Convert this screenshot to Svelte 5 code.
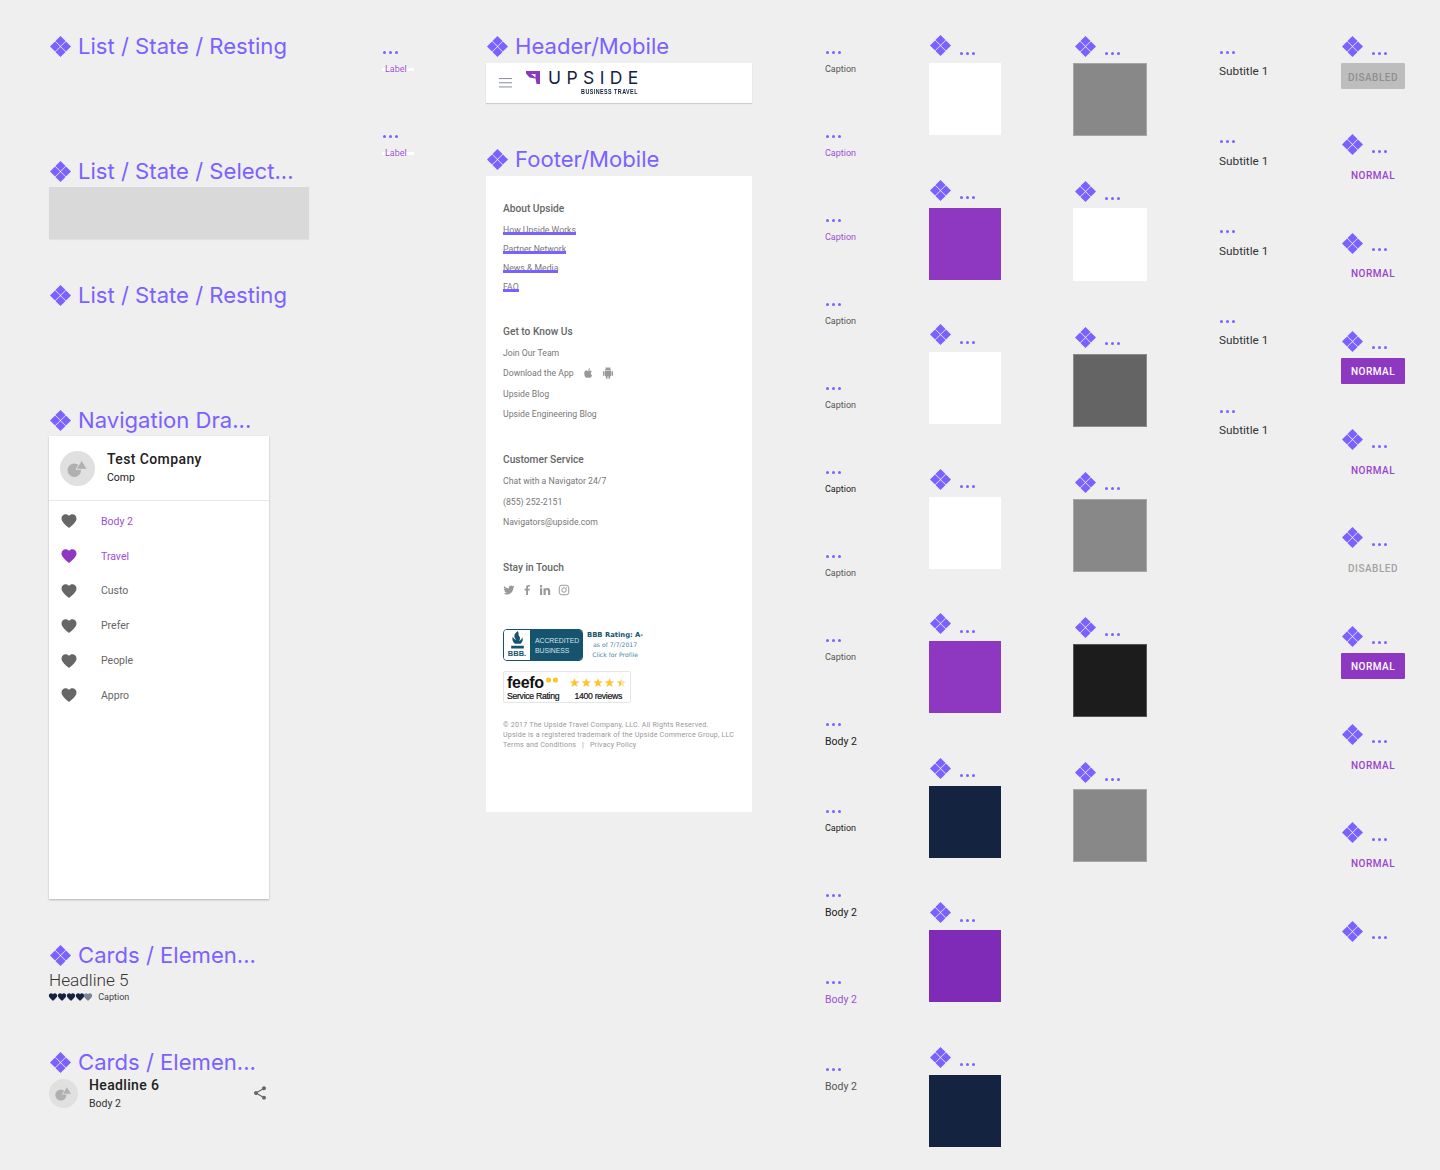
<script>
  const navItems = [
    { label: 'Body 2', tone: 'body', icon: 'grey' },
    { label: 'Travel', tone: 'active', icon: 'active' },
    { label: 'Custo', tone: 'grey', icon: 'grey' },
    { label: 'Prefer', tone: 'grey', icon: 'grey' },
    { label: 'People', tone: 'grey', icon: 'grey' },
    { label: 'Appro', tone: 'grey', icon: 'grey' }
  ];

  const knowLinks = ['Join Our Team', 'Download the App', 'Upside Blog', 'Upside Engineering Blog'];
  const aboutLinks = ['How Upside Works', 'Partner Network', 'News & Media', 'FAQ'];
  const serviceLinks = ['Chat with a Navigator 24/7', '(855) 252-2151', 'Navigators@upside.com'];

  const labels = [
    { text: 'Caption', tone: 'grey' },
    { text: 'Caption', tone: 'purple' },
    { text: 'Caption', tone: 'purple' },
    { text: 'Caption', tone: 'grey' },
    { text: 'Caption', tone: 'grey' },
    { text: 'Caption', tone: 'dark' },
    { text: 'Caption', tone: 'grey' },
    { text: 'Caption', tone: 'grey' },
    { text: 'Body 2', tone: 'dark big' },
    { text: 'Caption', tone: 'dark' },
    { text: 'Body 2', tone: 'dark big' },
    { text: 'Body 2', tone: 'purple big' },
    { text: 'Body 2', tone: 'grey big' }
  ];

  const swatchesA = ['white', 'purple', 'white', 'white', 'purple', 'navy', 'deep', 'navy'];
  const swatchesB = ['mid', 'white', 'dim', 'mid', 'black', 'mid'];

  const buttons = [
    { text: 'DISABLED', kind: 'off' },
    { text: 'NORMAL', kind: 'flat' },
    { text: 'NORMAL', kind: 'flat' },
    { text: 'NORMAL', kind: 'fill' },
    { text: 'NORMAL', kind: 'flat' },
    { text: 'DISABLED', kind: 'ghost' },
    { text: 'NORMAL', kind: 'fill' },
    { text: 'NORMAL', kind: 'flat' },
    { text: 'NORMAL', kind: 'flat' },
    { text: '', kind: 'none' }
  ];
</script>

{#snippet diamond()}
  <svg class="diamond" viewBox="0 0 22 22" aria-hidden="true">
    <path d="M11 0l5.300 5.300-5.300 5.300-5.300-5.300z" />
    <path d="M5.300 5.700l5.300 5.300-5.300 5.300L0 11z" />
    <path d="M16.700 5.700l5.300 5.300-5.300 5.300-5.300-5.300z" />
    <path d="M11 11.400l5.300 5.300-5.300 5.300-5.300-5.300z" />
  </svg>
{/snippet}

{#snippet dots()}
  <span class="dots"><i></i><i></i><i></i></span>
{/snippet}

{#snippet title(text)}
  <div class="title">{@render diamond()}<span>{text}</span></div>
{/snippet}

{#snippet avatar(cls)}
  <span class="avatar {cls}">
    <svg viewBox="0 0 35 35" aria-hidden="true">
      <circle cx="14.3" cy="19.3" r="6.7" />
      <path class="tri" d="M21.7 9.3L27.3 18.3H16z" />
    </svg>
  </span>
{/snippet}

{#snippet heart()}
  <svg class="heart" viewBox="0 0 24 24" aria-hidden="true">
    <path d="M12 21.3l-1.5-1.3C5.4 15.4 2 12.3 2 8.5C2 5.4 4.4 3 7.5 3c1.7 0 3.4.8 4.5 2.1C13.100 3.800 14.800 3 16.500 3 19.600 3 22 5.400 22 8.500c0 3.800-3.400 6.900-8.500 11.500z" />
  </svg>
{/snippet}

<div class="canvas">
  <section class="col-list">
    {@render title('List / State / Resting')}
    <div class="push-lg">{@render title('List / State / Select...')}</div>
    <div class="selected"></div>
    <div class="push-sm">{@render title('List / State / Resting')}</div>
    <div class="push-lg">{@render title('Navigation Dra...')}</div>

    <div class="drawer">
      <div class="drawer-head">
        {@render avatar('lg')}
        <div class="drawer-names">
          <div class="company">Test Company</div>
          <div class="comp">Comp</div>
        </div>
      </div>
      <ul class="nav">
        {#each navItems as item}
          <li class={item.icon}>
            {@render heart()}
            <span class={item.tone}>{item.label}</span>
          </li>
        {/each}
      </ul>
    </div>

    <div class="push-sm">{@render title('Cards / Elemen...')}</div>
    <div class="headline5">Headline 5</div>
    <div class="rating">
      <span class="hearts">
        {#each [1, 2, 3, 4] as n (n)}{@render heart()}{/each}
        <span class="faded">{@render heart()}</span>
      </span>
      <span class="rating-cap">Caption</span>
    </div>

    <div class="push-card">{@render title('Cards / Elemen...')}</div>
    <div class="card-row">
      {@render avatar('sm')}
      <div class="card-text">
        <div class="headline6">Headline 6</div>
        <div class="card-body">Body 2</div>
      </div>
      <svg class="share" viewBox="0 0 24 24" aria-hidden="true">
        <path d="M18 16.080c-.76 0-1.440.3-1.960.77L8.910 12.700c.05-.23.09-.46.09-.7s-.04-.47-.09-.7l7.050-4.110c.54.5 1.250.81 2.040.81 1.660 0 3-1.340 3-3s-1.340-3-3-3-3 1.340-3 3c0 .24.04.47.09.7L8.040 9.810C7.500 9.310 6.790 9 6 9c-1.660 0-3 1.340-3 3s1.340 3 3 3c.79 0 1.500-.31 2.040-.81l7.120 4.160c-.05.21-.08.43-.08.65 0 1.610 1.310 2.920 2.920 2.920s2.920-1.310 2.920-2.920-1.310-2.920-2.920-2.920z" />
      </svg>
    </div>
  </section>

  <section class="col-labels">
    <div class="label-item">{@render dots()}<span class="label">Label</span></div>
    <div class="label-item">{@render dots()}<span class="label">Label</span></div>
  </section>

  <section class="col-mobile">
    {@render title('Header/Mobile')}
    <header class="m-header">
      <svg class="burger" viewBox="0 0 14 10" aria-hidden="true">
        <path d="M0 .5h14M0 5h14M0 9.5h14" />
      </svg>
      <svg class="mark" viewBox="0 0 14 13" aria-hidden="true">
        <path d="M0 0h14v13h-3.5L9.5 7.500 3.500 6.500 0 2.500z" />
        <path class="notch" d="M5 3h4.500v3.500z" />
      </svg>
      <div class="brand">
        <span class="upside">UPSIDE</span>
        <span class="travel">BUSINESS TRAVEL</span>
      </div>
    </header>

    <div class="push-footer">{@render title('Footer/Mobile')}</div>
    <footer class="m-footer">
      <h4>About Upside</h4>
      <ul class="about">
        {#each aboutLinks as link}<li><span>{link}</span></li>{/each}
      </ul>

      <h4 class="know">Get to Know Us</h4>
      <ul class="links">
        {#each knowLinks as link}
          <li>
            {link}
            {#if link === 'Download the App'}
              <svg class="os apple" viewBox="0 0 24 24" aria-hidden="true">
                <path d="M17.500 12.600c0-2.400 2-3.500 2.100-3.600-1.100-1.700-2.900-1.900-3.500-1.900-1.500-.2-2.900.9-3.700.9-.8 0-1.900-.9-3.200-.9-1.600 0-3.200 1-4 2.400-1.700 3-.4 7.400 1.200 9.800.8 1.200 1.800 2.500 3 2.400 1.200 0 1.700-.8 3.100-.8 1.400 0 1.900.8 3.200.8 1.300 0 2.200-1.200 3-2.400.9-1.400 1.300-2.700 1.300-2.800-.1 0-2.500-1-2.500-3.900zM15.100 5.400c.7-.8 1.100-2 1-3.100-1 0-2.200.7-2.900 1.500-.6.700-1.200 1.900-1 3 1.100.1 2.200-.6 2.900-1.400z" />
              </svg>
              <svg class="os" viewBox="0 0 24 24" aria-hidden="true">
                <path d="M6 18c0 .6.400 1 1 1h1v3.500c0 .8.700 1.500 1.500 1.500s1.500-.7 1.500-1.500V19h2v3.500c0 .8.700 1.500 1.500 1.500s1.500-.7 1.500-1.500V19h1c.6 0 1-.4 1-1V8H6zM3.500 8C2.700 8 2 8.700 2 9.500v7c0 .8.700 1.500 1.500 1.500S5 17.300 5 16.500v-7C5 8.700 4.300 8 3.500 8zm17 0c-.8 0-1.500.7-1.500 1.500v7c0 .8.700 1.500 1.500 1.500s1.500-.7 1.500-1.500v-7c0-.8-.7-1.500-1.500-1.500zm-4.900-5.800l1.300-1.300c.2-.2.2-.5 0-.7-.2-.2-.5-.2-.7 0l-1.500 1.500C14 1.300 13 1 12 1s-2 .3-2.700.7L7.800.2c-.2-.2-.5-.2-.7 0-.2.2-.2.500 0 .7l1.300 1.300C7 3.300 6 5 6 7h12c0-2-1-3.700-2.400-4.800z" />
              </svg>
            {/if}
          </li>
        {/each}
      </ul>

      <h4 class="service">Customer Service</h4>
      <ul class="links">
        {#each serviceLinks as link}<li>{link}</li>{/each}
      </ul>

      <h4 class="touch">Stay in Touch</h4>
      <div class="social">
        <svg viewBox="0 0 24 24" aria-hidden="true">
          <path d="M23 5c-.8.400-1.700.6-2.600.7.900-.6 1.600-1.400 2-2.500-.9.500-1.800.9-2.900 1.100C18.700 3.500 17.500 3 16.200 3c-2.500 0-4.600 2-4.600 4.600 0 .4 0 .7.100 1C7.900 8.400 4.500 6.600 2.300 3.800c-.4.700-.6 1.500-.6 2.300 0 1.600.8 3 2 3.800-.8 0-1.500-.2-2.100-.6v.1c0 2.200 1.600 4.100 3.700 4.500-.4.100-.8.200-1.200.2-.3 0-.6 0-.9-.1.600 1.800 2.300 3.200 4.300 3.200-1.600 1.200-3.600 2-5.700 2H.7C2.800 20.500 5.200 21 7.800 21c8.300 0 12.900-6.900 12.900-12.900v-.6c.9-.6 1.700-1.400 2.300-2.500z" />
        </svg>
        <svg viewBox="0 0 24 24" aria-hidden="true">
          <path d="M14 22v-9h3.200l.5-3.700H14V7c0-1.100.3-1.800 1.800-1.800h2V1.900C17.400 1.900 16.300 1.800 15 1.800c-2.800 0-4.700 1.700-4.700 4.800v2.700H7V13h3.300v9z" />
        </svg>
        <svg viewBox="0 0 24 24" aria-hidden="true">
          <path d="M2 8.500h4.300V22H2zM4.100 2C5.500 2 6.600 3.100 6.600 4.500S5.500 7 4.100 7 1.700 5.900 1.700 4.500 2.800 2 4.100 2zM9 8.500h4.100v1.900c.6-1.100 2-2.200 4.100-2.200 4.400 0 5.200 2.900 5.200 6.600V22H18v-6.400c0-1.500 0-3.500-2.100-3.500-2.200 0-2.500 1.700-2.500 3.400V22H9z" />
        </svg>
        <svg class="insta" viewBox="0 0 24 24" aria-hidden="true">
          <rect x="2.500" y="2.500" width="19" height="19" rx="5" />
          <circle cx="12" cy="12" r="4.500" />
          <circle class="pip" cx="17.400" cy="6.600" r="1.200" />
        </svg>
      </div>

      <div class="bbb-row">
        <div class="bbb">
          <div class="bbb-seal">
            <svg viewBox="0 0 16 18" aria-hidden="true">
              <path d="M8 0C6 2 5 3 5 5c0 1.500 1 2.500 2 3.500-1.500-.5-3-1.500-3.500-3-1 2.500 0 5 2 6.500H11c2-1.500 2.500-4 1.500-6-.5 2-2 3-3 3.500 1.500-2 1-4-.5-5.500.3-1.500 0-3-1-4zM2 14h12v2.500H2z" />
            </svg>
            <span>BBB.</span>
          </div>
          <div class="bbb-text">ACCREDITED<br />BUSINESS</div>
        </div>
        <div class="bbb-side">
          <b>BBB Rating: A-</b>
          <span>as of 7/7/2017</span>
          <span>Click for Profile</span>
        </div>
      </div>

      <div class="feefo">
        <div class="feefo-left">
          <div class="feefo-name">feefo<svg viewBox="0 0 16 7" aria-hidden="true"><circle cx="4" cy="3.500" r="3" /><circle cx="12" cy="3.500" r="3" /></svg></div>
          <div class="feefo-sub">Service Rating</div>
        </div>
        <div class="feefo-right">
          <div class="stars">★★★★<span>★</span></div>
          <div class="feefo-sub">1400 reviews</div>
        </div>
      </div>

      <div class="legal">
        <div>© 2017 The Upside Travel Company, LLC. All Rights Reserved.</div>
        <div>Upside is a registered trademark of the Upside Commerce Group, LLC</div>
        <div>Terms and Conditions &nbsp; | &nbsp; Privacy Policy</div>
      </div>
    </footer>
  </section>

  <section class="col-captions">
    {#each labels as item}
      <div class="cap-item {item.tone}">{@render dots()}<span class="cap">{item.text}</span></div>
    {/each}
  </section>

  <section class="col-swatch-a">
    {#each swatchesA as tone}
      <div class="swatch-item">
        <div class="item-head">{@render diamond()}{@render dots()}</div>
        <div class="swatch {tone}"></div>
      </div>
    {/each}
  </section>

  <section class="col-swatch-b">
    {#each swatchesB as tone}
      <div class="swatch-item">
        <div class="item-head">{@render diamond()}{@render dots()}</div>
        <div class="swatch {tone}"></div>
      </div>
    {/each}
  </section>

  <section class="col-subtitles">
    {#each [1, 2, 3, 4, 5] as n (n)}
      <div class="sub-item">{@render dots()}<span class="sub">Subtitle 1</span></div>
    {/each}
  </section>

  <section class="col-buttons">
    {#each buttons as btn}
      <div class="btn-item">
        <div class="item-head">{@render diamond()}{@render dots()}</div>
        {#if btn.text}<button class={btn.kind}>{btn.text}</button>{/if}
      </div>
    {/each}
  </section>
</div>

<style>
  :global(body) {
    margin: 0;
    background: #efefef;
  }

  .canvas {
    width: 1440px;
    height: 1170px;
    overflow: hidden;
    display: flex;
    background: #efefef;
    font-family: Roboto, sans-serif;
  }

  ul {
    list-style: none;
    margin: 0;
    padding: 0;
  }

  section {
    flex: none;
    box-sizing: border-box;
    padding-top: 34px;
  }

  .title {
    display: flex;
    align-items: center;
    gap: 7px;
    height: 24px;
    margin-bottom: 4px;
    padding-left: 1px;
    font-family: Inter, sans-serif;
    font-size: 22.1px;
    line-height: 24px;
    color: #7b61ff;
    white-space: nowrap;
  }

  .diamond {
    flex: none;
    width: 21px;
    height: 21px;
    fill: #7b61ff;
  }

  .dots {
    display: flex;
    gap: 3px;
    height: 3px;
  }

  .dots i {
    width: 3px;
    height: 3px;
    border-radius: 50%;
    background: #7b61ff;
  }

  .label-item .dots,
  .cap-item .dots,
  .sub-item .dots {
    margin-left: 1px;
  }

  /* column 1 */
  .col-list {
    width: 333px;
    margin-left: 49px;
  }

  .push-lg {
    margin-top: 101px;
  }

  .push-sm {
    margin-top: 44px;
  }

  .push-card {
    margin-top: 46px;
  }

  .selected {
    width: 260px;
    height: 52px;
    background: #d9d9d9;
    box-shadow: 0 1px 1px rgba(0, 0, 0, 0.05);
  }

  .drawer {
    width: 220px;
    height: 463px;
    background: #fff;
    box-shadow: 0 1px 2px rgba(0, 0, 0, 0.25);
  }

  .drawer-head {
    display: flex;
    align-items: center;
    gap: 12px;
    height: 64px;
    padding-left: 11px;
    border-bottom: 1px solid #e8e8e8;
  }

  .drawer-names {
    padding-bottom: 2px;
  }

  .avatar {
    flex: none;
    display: flex;
    border-radius: 50%;
    background: #e0e0e0;
  }

  .avatar svg {
    width: 100%;
    height: 100%;
    fill: #b0b0b0;
  }

  .avatar .tri {
    stroke: #e0e0e0;
    stroke-width: 1;
  }

  .avatar.lg {
    width: 35px;
    height: 35px;
  }

  .avatar.sm {
    width: 29px;
    height: 29px;
  }

  .company {
    font-size: 14px;
    font-weight: 500;
    line-height: 18px;
    letter-spacing: 0.4px;
    color: #212121;
  }

  .comp {
    margin-top: 3px;
    font-size: 10.5px;
    line-height: 14px;
    color: #212121;
  }

  .nav {
    padding-top: 3px;
  }

  .nav li {
    display: flex;
    align-items: center;
    gap: 23px;
    height: 34.8px;
    padding-left: 11px;
    font-size: 10.5px;
  }

  .heart {
    display: block;
    width: 18px;
    height: 18px;
    fill: #666;
  }

  .nav li.active .heart {
    fill: #8e38c2;
  }

  .body,
  .active {
    color: #9c4fd2;
  }

  .grey {
    color: #666;
  }

  .headline5 {
    height: 18px;
    margin-top: -1px;
    font-size: 17.2px;
    font-weight: 300;
    line-height: 20px;
    color: #333;
  }

  .rating {
    display: flex;
    align-items: center;
    gap: 6px;
    height: 14px;
    margin-top: 2px;
  }

  .hearts {
    display: flex;
    margin-left: -0.8px;
  }

  .hearts .heart {
    width: 10px;
    height: 10px;
    margin-right: -1.2px;
    fill: #14233f;
  }

  .hearts .faded .heart {
    fill: #7b8494;
  }

  .rating-cap {
    font-size: 9px;
    color: #444;
  }

  .card-row {
    display: flex;
    align-items: center;
    width: 220px;
    height: 30px;
  }

  .card-text {
    flex: 1;
    margin-left: 11px;
  }

  .headline6 {
    font-size: 14px;
    font-weight: 500;
    line-height: 16px;
    letter-spacing: 0.35px;
    color: #212121;
  }

  .card-body {
    margin-top: 4px;
    font-size: 10.5px;
    line-height: 13px;
    color: #333;
  }

  .share {
    width: 16px;
    height: 16px;
    margin-right: 1px;
    fill: #666;
  }

  /* column 2 */
  .col-labels {
    width: 104px;
    padding-top: 50.5px;
  }

  .label-item {
    height: 84px;
  }

  .label {
    display: block;
    width: 29px;
    margin-top: 9.5px;
    padding-left: 3px;
    font-size: 9px;
    line-height: 12px;
    color: #9c4fd2;
    background: linear-gradient(#fff, #fff) center / 100% 3px no-repeat;
  }

  /* column 3 */
  .col-mobile {
    width: 339px;
  }

  .col-mobile .title {
    margin-bottom: 5px;
  }

  .m-header {
    display: flex;
    align-items: flex-start;
    width: 266px;
    height: 40px;
    box-sizing: border-box;
    padding: 5px 0 0 13px;
    background: #fff;
    box-shadow: 0 1px 1px rgba(0, 0, 0, 0.15);
  }

  .burger {
    width: 13px;
    height: 9.5px;
    margin-top: 10px;
    stroke: #7b8494;
    fill: none;
  }

  .mark {
    width: 14px;
    height: 13px;
    margin: 3px 0 0 14px;
    fill: #8e38c2;
  }

  .mark .notch {
    fill: #fff;
  }

  .brand {
    display: flex;
    flex-direction: column;
    align-items: flex-end;
    margin-left: 8px;
  }

  .upside {
    font-family: Inter, sans-serif;
    font-size: 17.5px;
    line-height: 18px;
    letter-spacing: 5.4px;
    margin: 1px -5.4px 0 0;
    color: #14233f;
  }

  .travel {
    margin-top: 1px;
    font-family: 'Liberation Sans', sans-serif;
    font-size: 7.5px;
    font-weight: 700;
    line-height: 8px;
    letter-spacing: 0.6px;
    color: #14233f;
    transform: scaleX(0.72);
    transform-origin: right center;
  }

  .push-footer {
    margin-top: 44px;
  }

  .m-footer {
    width: 266px;
    height: 636px;
    box-sizing: border-box;
    padding: 26px 0 0 17px;
    background: #fff;
    color: #777;
  }

  h4 {
    margin: 0;
    font-size: 10.2px;
    font-weight: 500;
    line-height: 14px;
    color: #666;
  }

  .about {
    margin-top: 5px;
  }

  .about li {
    height: 19px;
    font-size: 8.7px;
    line-height: 19px;
  }

  .about span {
    position: relative;
    display: inline-block;
  }

  .about span::after {
    content: '';
    position: absolute;
    left: 0;
    right: 0;
    top: 10.5px;
    height: 3px;
    background: #7b61ff;
  }

  .know {
    margin-top: 28px;
  }

  .links {
    margin-top: 4px;
  }

  .links li {
    display: flex;
    align-items: center;
    height: 20.3px;
    font-size: 8.7px;
  }

  .os {
    width: 12px;
    height: 12px;
    margin-left: 8px;
    fill: #999;
  }

  .service {
    margin-top: 29px;
  }

  .touch {
    margin-top: 29px;
  }

  .social {
    display: flex;
    align-items: center;
    gap: 6px;
    margin-top: 9px;
  }

  .social svg {
    width: 12px;
    height: 12px;
    fill: #999;
  }

  .social .insta {
    margin-left: 1px;
    fill: none;
    stroke: #999;
    stroke-width: 2;
  }

  .social .pip {
    fill: #999;
    stroke: none;
  }

  .bbb-row {
    display: flex;
    align-items: center;
    margin-top: 33px;
  }

  .bbb {
    display: flex;
    width: 80px;
    height: 32px;
    box-sizing: border-box;
    border: 1px solid #15536f;
    border-radius: 4px;
    overflow: hidden;
  }

  .bbb-seal {
    display: flex;
    flex-direction: column;
    align-items: center;
    width: 26px;
    padding-top: 1px;
    background: #fff;
    color: #15536f;
  }

  .bbb-seal svg {
    width: 17px;
    height: 19px;
    fill: #15536f;
  }

  .bbb-seal span {
    font-family: 'Liberation Sans', sans-serif;
    font-size: 7.5px;
    font-weight: 700;
    line-height: 8px;
  }

  .bbb-text {
    flex: 1;
    padding: 6px 0 0 5px;
    background: #15536f;
    font-family: 'Liberation Sans', sans-serif;
    font-size: 6.8px;
    line-height: 9.5px;
    color: #d5e4ea;
  }

  .bbb-side {
    display: flex;
    flex-direction: column;
    align-items: center;
    margin-left: 4px;
    font-family: 'DejaVu Sans', sans-serif;
    font-size: 6.1px;
    line-height: 9.5px;
    color: #4a86a0;
  }

  .bbb-side b {
    font-size: 6.8px;
    color: #15536f;
  }

  .feefo {
    display: flex;
    width: 128px;
    height: 32px;
    box-sizing: border-box;
    margin-top: 10px;
    padding: 3px 0 0 3px;
    border: 1px solid #e6e6e6;
    border-radius: 2px;
    color: #111;
    font-family: 'Liberation Sans', sans-serif;
  }

  .feefo-left {
    width: 62px;
  }

  .feefo-name {
    display: flex;
    align-items: flex-start;
    height: 16px;
    font-size: 16px;
    font-weight: 700;
    line-height: 16px;
    letter-spacing: -0.3px;
  }

  .feefo-name svg {
    width: 14px;
    height: 6px;
    margin: 2px 0 0 1px;
    fill: #fcc72c;
  }

  .feefo-sub {
    font-size: 8.7px;
    line-height: 10px;
    letter-spacing: -0.3px;
    -webkit-text-stroke: 0.2px #111;
  }

  .feefo-right {
    display: flex;
    flex-direction: column;
    align-items: center;
  }

  .stars {
    height: 16px;
    font-family: 'DejaVu Sans', sans-serif;
    font-size: 12.6px;
    line-height: 16px;
    letter-spacing: 0.4px;
    color: #fcc42c;
  }

  .stars span {
    color: transparent;
    background: linear-gradient(90deg, #fcc42c 50%, #fde59b 50%);
    -webkit-background-clip: text;
    background-clip: text;
  }

  .legal {
    margin-top: 17px;
    font-size: 7.1px;
    line-height: 10px;
    letter-spacing: 0.2px;
    color: #999;
  }

  /* caption column */
  .col-captions {
    width: 104px;
    padding-top: 50.5px;
  }

  .cap-item {
    height: 84px;
    font-size: 9px;
    line-height: 12px;
  }

  .cap-item.big {
    height: 87px;
    font-size: 10.5px;
  }

  .cap {
    display: block;
    margin-top: 9.5px;
  }

  .cap-item.big .cap {
    margin-top: 10.5px;
  }

  .cap-item.grey {
    color: #555;
  }

  .cap-item.purple {
    color: #9c4fd2;
  }

  .cap-item.dark {
    color: #212121;
  }

  /* swatches */
  .col-swatch-a {
    width: 144px;
  }

  .col-swatch-b {
    width: 146px;
  }

  .swatch-item {
    height: 144.5px;
  }

  .col-swatch-b .swatch-item {
    height: 145.3px;
  }

  .item-head {
    display: flex;
    gap: 9px;
    height: 24px;
    margin-bottom: 5px;
    padding: 1px 0 0 1px;
    box-sizing: border-box;
  }

  .item-head .dots {
    margin-top: 16.5px;
  }

  .col-swatch-b .item-head {
    padding: 2px 0 0 2px;
  }

  .col-swatch-b .item-head .dots,
  .btn-item .item-head .dots {
    margin-top: 15.5px;
  }

  .btn-item .item-head {
    padding-top: 2px;
  }

  .swatch {
    width: 72px;
    height: 72px;
  }

  .col-swatch-b .swatch {
    width: 74px;
    height: 73px;
    box-sizing: border-box;
    border: 1px solid rgba(255, 255, 255, 0.25);
  }

  .swatch.white {
    background: #fff;
  }

  .swatch.purple {
    background: #8e38c2;
  }

  .swatch.deep {
    background: #7f2bb8;
  }

  .swatch.navy {
    background: #14233f;
  }

  .swatch.mid {
    background: #888;
  }

  .swatch.dim {
    background: #646464;
  }

  .swatch.black {
    background: #1c1c1c;
  }

  /* subtitles */
  .col-subtitles {
    width: 122px;
    padding-top: 50.5px;
  }

  .sub-item {
    height: 89.75px;
    font-size: 11.8px;
    line-height: 16px;
    color: #333;
  }

  .sub {
    display: block;
    margin-top: 9.5px;
  }

  /* buttons */
  .col-buttons {
    flex: 1;
  }

  .btn-item {
    height: 98.3px;
  }

  button {
    display: block;
    width: 64px;
    height: 26px;
    padding: 2px 0 0;
    border: 0;
    border-radius: 1px;
    background: none;
    font-family: Roboto, sans-serif;
    font-size: 10px;
    font-weight: 500;
    letter-spacing: 0.5px;
  }

  button.off {
    background: #bdbdbd;
    color: #8f8f8f;
  }

  button.ghost {
    color: #a3a3a3;
  }

  button.flat {
    color: #9a44cc;
  }

  button.fill {
    background: #8e38c2;
    color: #fff;
  }
</style>
